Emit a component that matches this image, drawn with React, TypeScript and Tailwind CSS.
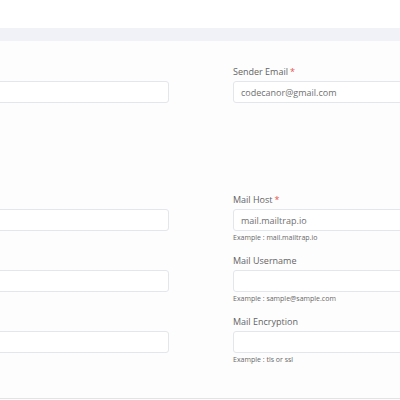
const font = { fontFamily: '"Open Sans", "Noto Sans", sans-serif' }

type Field = {
  label?: string
  required?: boolean
  value?: string
  example?: string
}

// left column sits mostly off-screen; only its inputs show
const rows: [Field, Field][] = [
  [{}, { label: 'Sender Email', required: true, value: 'codecanor@gmail.com' }],
  [{}, { label: 'Mail Host', required: true, value: 'mail.mailtrap.io', example: 'Example : mail.mailtrap.io' }],
  [{}, { label: 'Mail Username', example: 'Example : sample@sample.com' }],
  [{}, { label: 'Mail Encryption', example: 'Example : tls or ssl' }],
]

function FormField({ field }: { field: Field }) {
  return (
    <div>
      <label className="mb-[3px] block h-[12px] text-[9px] leading-[12px] text-[#646464]">
        {field.label}
        {field.required && <span className="ml-[2px] text-[#e5534b]">*</span>}
      </label>
      <input
        readOnly
        value={field.value ?? ''}
        className="block h-[22px] w-full rounded-[3px] border border-[#e3e6eb] bg-white px-[7px] text-[9px] text-[#707070] outline-none"
        style={font}
      />
      {field.example && (
        <p className="mt-[2px] h-[10px] text-[7px] leading-[10px] text-[#686868]">{field.example}</p>
      )}
    </div>
  )
}

export default function App() {
  return (
    <div className="h-[400px] w-[400px] overflow-hidden bg-white" style={font}>
      <div className="h-[28px] bg-white" />
      <div className="h-[13px] bg-[#f1f2f7]" />
      <div className="h-[358px] border-b border-[#e3e3e3] bg-[#fdfdfd] pt-[25px]">
        <div className="ml-[-200px] grid w-[802px] grid-cols-[369px_369px] gap-x-[64px]">
          {rows.map(([left, right], i) => (
            <div key={i} className={`col-span-2 grid grid-cols-subgrid ${i === 0 ? 'mb-[91px]' : 'mb-[12px]'}`}>
              <FormField field={left} />
              <FormField field={right} />
            </div>
          ))}
        </div>
      </div>
    </div>
  )
}
